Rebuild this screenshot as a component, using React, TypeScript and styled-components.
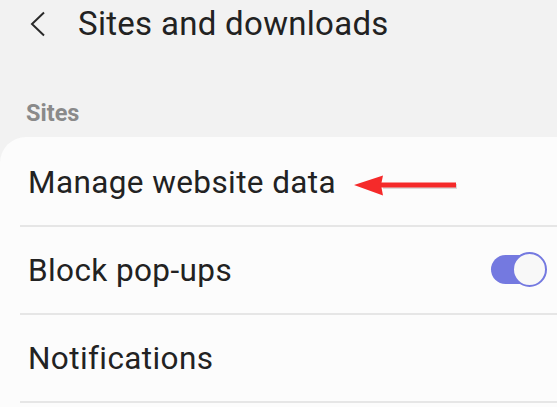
import React from "react";
import styled, { createGlobalStyle } from "styled-components";

const Global = createGlobalStyle`
  html, body {
    margin: 0;
    padding: 0;
    background: #f2f2f2;
    font-family: Roboto, "Noto Sans", "Liberation Sans", sans-serif;
    overflow: hidden;
  }
`;

const Page = styled.div`
  width: 557px;
  height: 407px;
  background: #f2f2f2;
  display: flex;
  flex-direction: column;
  overflow: hidden;
`;

const Header = styled.header`
  display: flex;
  align-items: center;
  height: 48px;
  padding-left: 29px;
`;

const BackButton = styled.button`
  display: flex;
  align-items: center;
  justify-content: center;
  padding: 0;
  border: 0;
  background: none;
  width: 18px;
  height: 28px;
  cursor: pointer;
`;

const Title = styled.h1`
  margin: 0 0 0 31px;
  font-size: 33px;
  line-height: 40px;
  font-weight: 400;
  letter-spacing: 0.3px;
  color: #222;
`;

const SectionLabel = styled.div`
  margin: 52px 0 0 26px;
  font-size: 23.5px;
  line-height: 26px;
  font-weight: 700;
  color: #8a8a8a;
`;

const Card = styled.section`
  margin-top: 11px;
  padding-top: 2px;
  flex: 1;
  background: #fcfcfc;
  border-top-left-radius: 26px;
  display: flex;
  flex-direction: column;
`;

const Row = styled.div`
  display: flex;
  align-items: center;
  height: 88px;
  margin-left: 20px;
  padding: 0 10px 0 8px;
  border-bottom: 2px solid #e6e6e6;
  box-sizing: border-box;
  flex: 0 0 auto;
`;

const RowLabel = styled.span`
  font-size: 31.5px;
  letter-spacing: 0.4px;
  color: #222;
  flex: 0 0 auto;
`;

const Spacer = styled.div`
  flex: 1;
`;

const Arrow = styled.svg`
  margin: 10px 0 0 17px;
  flex: 0 0 auto;
`;

const Toggle = styled.div<{ $on: boolean }>`
  position: relative;
  width: 57px;
  height: 36px;
  &::before {
    content: "";
    position: absolute;
    left: 1px;
    top: 3px;
    width: 50px;
    height: 29px;
    border-radius: 15px;
    background: ${(p) => (p.$on ? "#7479e0" : "#bdbdbd")};
  }
  &::after {
    content: "";
    position: absolute;
    left: ${(p) => (p.$on ? "22px" : "0px")};
    top: 0px;
    width: 31px;
    height: 31px;
    border-radius: 50%;
    background: #f8f8f8;
    border: 2px solid ${(p) => (p.$on ? "#7479e0" : "#bdbdbd")};
  }
`;

export default function App() {
  return (
    <>
      <Global />
      <Page>
        <Header>
          <BackButton aria-label="Back">
            <svg width="16" height="26" viewBox="0 0 16 26">
              <path d="M14 1.5 L2 13 L14 24.5" fill="none" stroke="#2a2a2a" strokeWidth="2" />
            </svg>
          </BackButton>
          <Title>Sites and downloads</Title>
        </Header>
        <SectionLabel>Sites</SectionLabel>
        <Card>
          <Row>
            <RowLabel>Manage website data</RowLabel>
            <Arrow width="106" height="24" viewBox="0 0 106 24">
              <path d="M30 11.5 H104" stroke="#9a9a9a" strokeOpacity="0.35" strokeWidth="5" />
              <path d="M28 10 H103" stroke="#f52a2a" strokeWidth="5" />
              <path d="M1 10 L30 0.5 L28 10 L30 20.5 Z" fill="#f52a2a" />
            </Arrow>
          </Row>
          <Row>
            <RowLabel>Block pop-ups</RowLabel>
            <Spacer />
            <Toggle $on={true} role="switch" aria-checked="true" />
          </Row>
          <Row>
            <RowLabel>Notifications</RowLabel>
          </Row>
        </Card>
      </Page>
    </>
  );
}
